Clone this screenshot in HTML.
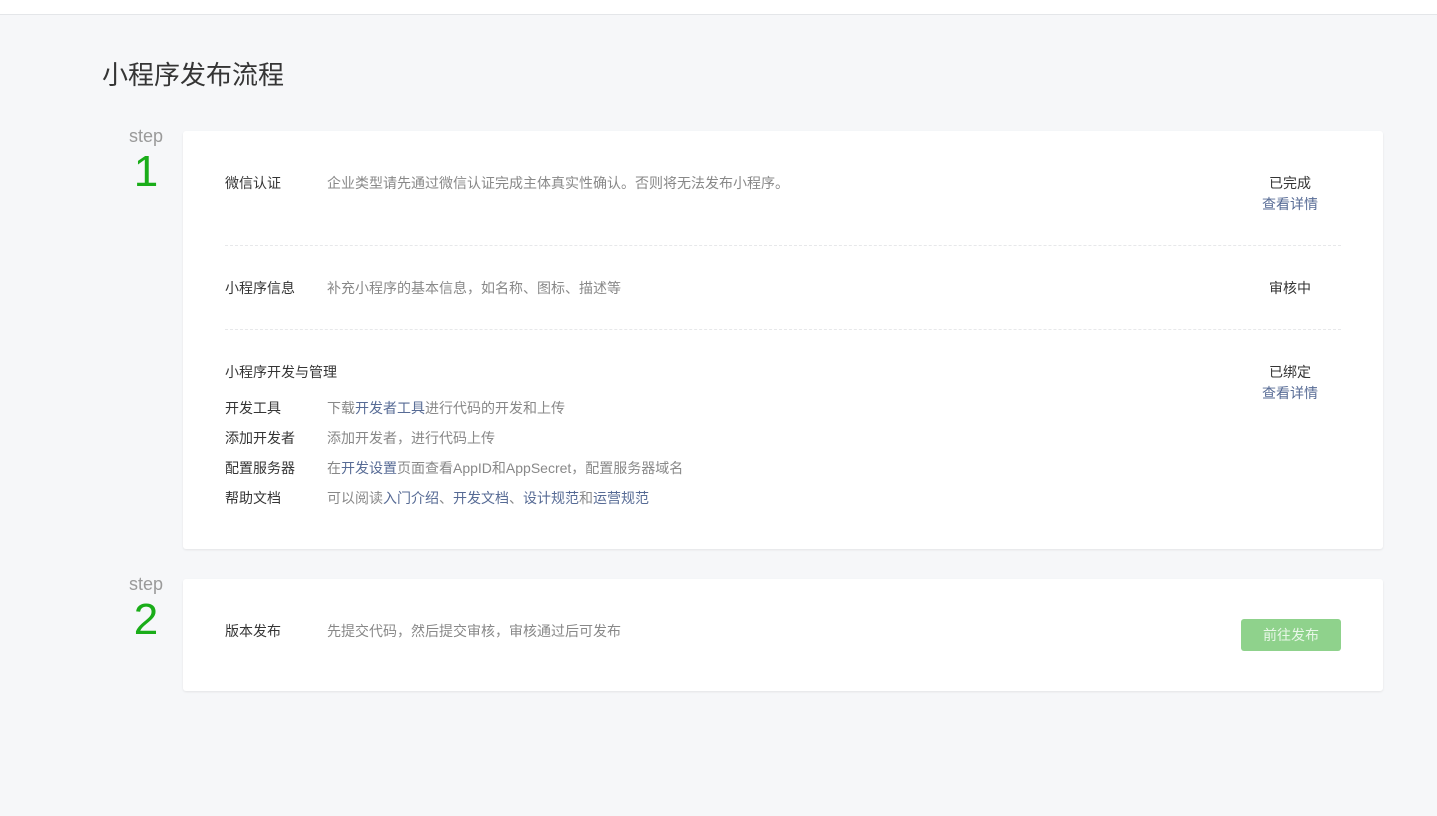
<!DOCTYPE html>
<html><head><meta charset="utf-8"><style>
body{margin:0;width:1437px;height:816px;background:#f6f7f9;font-family:"Liberation Sans","Noto Sans CJK SC",sans-serif;position:relative;overflow:hidden;color:#353535}
.a{position:absolute;white-space:nowrap}
.top{position:absolute;left:0;top:0;width:1437px;height:14px;background:#fff;border-bottom:1px solid #e4e6e9}
.card{position:absolute;left:183px;width:1200px;background:#fff;border-radius:3px;box-shadow:0 1px 2px rgba(0,0,0,.08)}
.step{position:absolute;left:118px;width:56px;text-align:center;color:#9a9a9a;font-size:18px}
.num{position:absolute;left:118px;width:56px;text-align:center;color:#1aad19;font-size:44px;line-height:44px}
.l{font-size:14px;color:#353535;left:225px}
.t{font-size:14px;color:#888;left:327px}
.t b{font-weight:normal;color:#576b95}
.r{font-size:14px;left:1240px;width:100px;text-align:center;color:#353535}
.lk{color:#576b95}
.hr{position:absolute;left:225px;width:1116px;border-top:1px dashed #e7e8ea}
.btn{position:absolute;left:1241px;top:619px;width:100px;height:32px;background:#8fd28c;border-radius:3px;color:#e8f7e7;font-size:14px;text-align:center;line-height:32px}
</style></head><body>
<div class="top"></div>
<div class="a" style="left:102px;top:55px;font-size:26px;color:#353535">小程序发布流程</div>
<div class="step" style="top:126px">step</div>
<div class="num" style="top:150px">1</div>
<div class="card" style="top:131px;height:418px"></div>
<div class="a l" style="top:173px">微信认证</div>
<div class="a t" style="top:173px">企业类型请先通过微信认证完成主体真实性确认。否则将无法发布小程序。</div>
<div class="a r" style="top:173px">已完成</div>
<div class="a r lk" style="top:194px">查看详情</div>
<div class="hr" style="top:245px"></div>
<div class="a l" style="top:278px">小程序信息</div>
<div class="a t" style="top:278px">补充小程序的基本信息，如名称、图标、描述等</div>
<div class="a r" style="top:278px">审核中</div>
<div class="hr" style="top:329px"></div>
<div class="a l" style="top:362px">小程序开发与管理</div>
<div class="a r" style="top:362px">已绑定</div>
<div class="a r lk" style="top:383px">查看详情</div>
<div class="a l" style="top:398px">开发工具</div>
<div class="a t" style="top:398px">下载<b>开发者工具</b>进行代码的开发和上传</div>
<div class="a l" style="top:428px">添加开发者</div>
<div class="a t" style="top:428px">添加开发者，进行代码上传</div>
<div class="a l" style="top:458px">配置服务器</div>
<div class="a t" style="top:458px">在<b>开发设置</b>页面查看AppID和AppSecret，配置服务器域名</div>
<div class="a l" style="top:488px">帮助文档</div>
<div class="a t" style="top:488px">可以阅读<b>入门介绍</b>、<b>开发文档</b>、<b>设计规范</b>和<b>运营规范</b></div>
<div class="step" style="top:574px">step</div>
<div class="num" style="top:598px">2</div>
<div class="card" style="top:579px;height:112px"></div>
<div class="a l" style="top:621px">版本发布</div>
<div class="a t" style="top:621px">先提交代码，然后提交审核，审核通过后可发布</div>
<div class="btn">前往发布</div>
</body></html>
